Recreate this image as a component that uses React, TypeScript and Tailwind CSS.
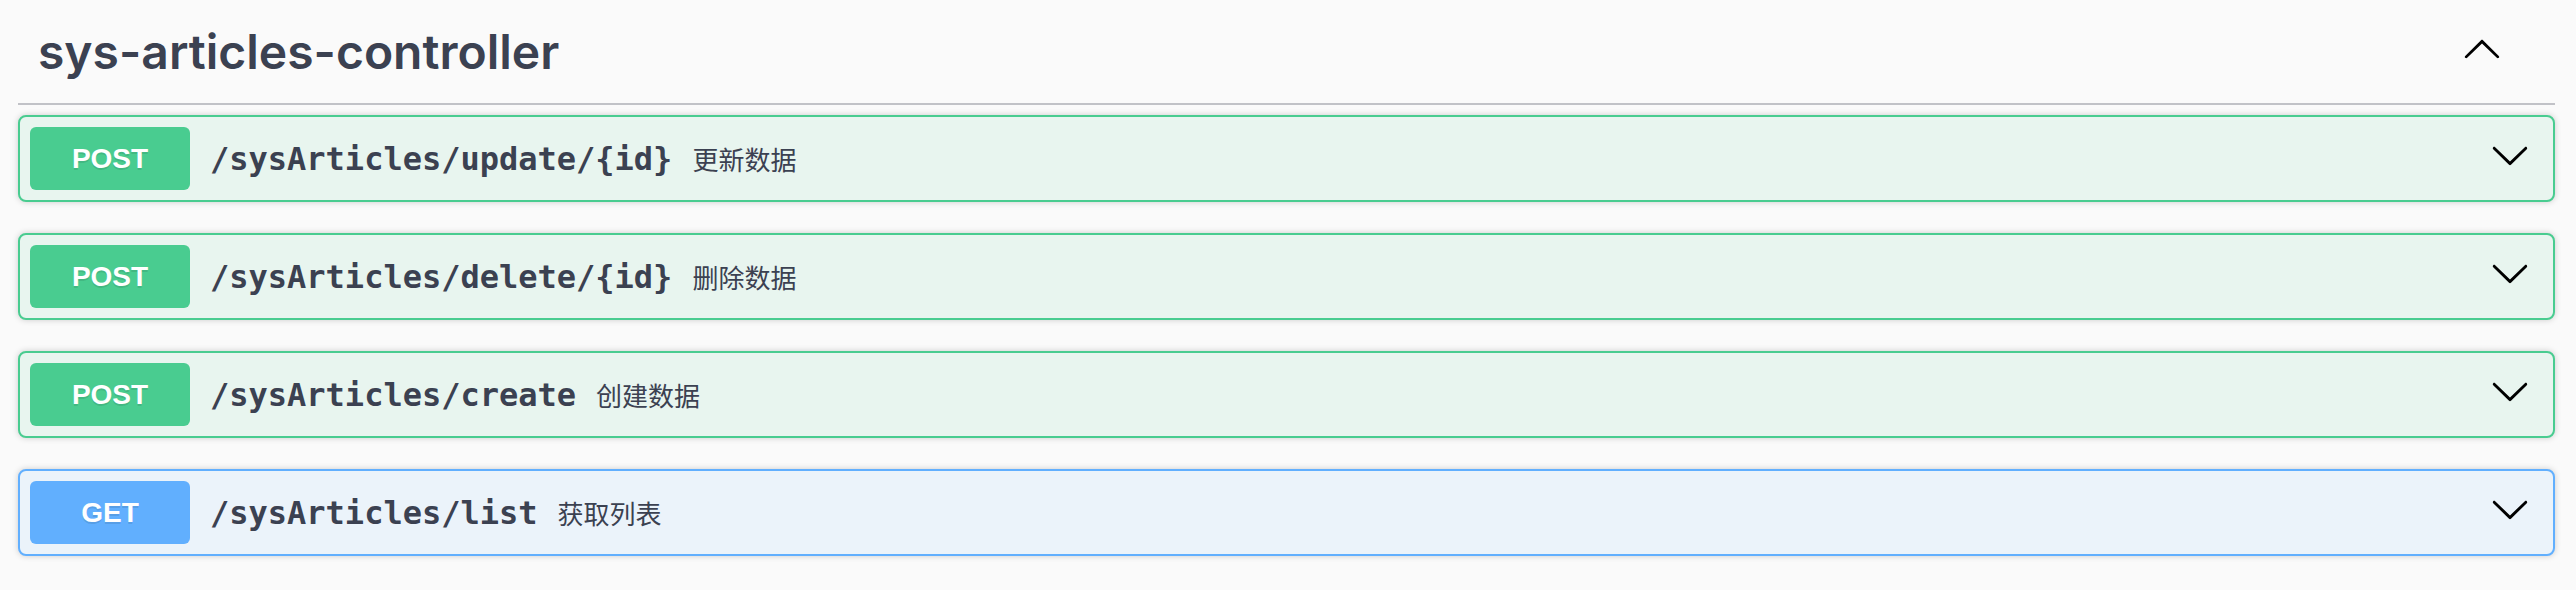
import React from "react";

type Op = { method: "POST" | "GET"; path: string; desc: string };

const ops: Op[] = [
  { method: "POST", path: "/sysArticles/update/{id}", desc: "更新数据" },
  { method: "POST", path: "/sysArticles/delete/{id}", desc: "删除数据" },
  { method: "POST", path: "/sysArticles/create", desc: "创建数据" },
  { method: "GET", path: "/sysArticles/list", desc: "获取列表" },
];

function ArrowDown() {
  return (
    <svg width="40" height="40" viewBox="0 0 20 20" aria-hidden="true">
      <path
        fill="#000"
        d="M17.418 6.109c.272-.268.709-.268.979 0s.271.701 0 .969l-7.908 7.83c-.27.268-.707.268-.979 0l-7.908-7.83c-.27-.268-.27-.701 0-.969.271-.268.709-.268.979 0L10 13.25l7.418-7.141z"
      />
    </svg>
  );
}

function ArrowUp() {
  return (
    <svg width="40" height="40" viewBox="0 0 20 20" aria-hidden="true">
      <path
        fill="#000"
        d="M17.418 14.908c.272.268.709.268.979 0s.271-.701 0-.969l-7.908-7.83c-.27-.268-.707-.268-.979 0l-7.908 7.83c-.27.268-.27.701 0 .969.271.268.709.268.979 0L10 7.749l7.418 7.159z"
      />
    </svg>
  );
}

function OpBlock({ op }: { op: Op }) {
  const isGet = op.method === "GET";
  return (
    <div
      className={
        "flex h-[87px] items-center rounded-[8px] border-2 pl-[10px] pr-[23px] shadow-[0_0_6px_rgba(0,0,0,0.19)] " +
        (isGet ? "border-[#61affe] bg-[#ebf3fa]" : "border-[#49cc90] bg-[#e8f5ef]")
      }
    >
      <div
        className={
          "flex h-[63px] w-[160px] shrink-0 items-center justify-center rounded-[6px] text-[28px] font-bold text-white [font-family:'Liberation_Sans',Arial,sans-serif] [text-shadow:0_2px_0_rgba(0,0,0,0.1)] " +
          (isGet ? "bg-[#61affe]" : "bg-[#49cc90]")
        }
      >
        {op.method}
      </div>
      <span className="px-[20px] text-[32px] font-bold text-[#3b4151] [font-family:'DejaVu_Sans_Mono',monospace]">
        {op.path}
      </span>
      <span className="flex-1 text-[26px] text-[#3b4151] [font-family:'Noto_Sans_CJK_SC',sans-serif]">
        {op.desc}
      </span>
      <div className="mb-[8px] flex shrink-0">
        <ArrowDown />
      </div>
    </div>
  );
}

export default function App() {
  return (
    <div className="min-h-[590px] bg-[#fafafa] pl-[18px] pr-[21px]">
      <div className="flex h-[105px] items-center border-b-2 border-[#c1c2c7] pl-[20px]">
        <h3 className="text-[48px] font-semibold text-[#3b4151] [font-family:Inter,'Liberation_Sans',sans-serif]">
          sys-articles-controller
        </h3>
        <div className="mb-[7px] ml-auto mr-[53px] flex">
          <ArrowUp />
        </div>
      </div>
      <div className="flex flex-col gap-[31px] pt-[10px]">
        {ops.map((op) => (
          <OpBlock key={op.path} op={op} />
        ))}
      </div>
    </div>
  );
}
